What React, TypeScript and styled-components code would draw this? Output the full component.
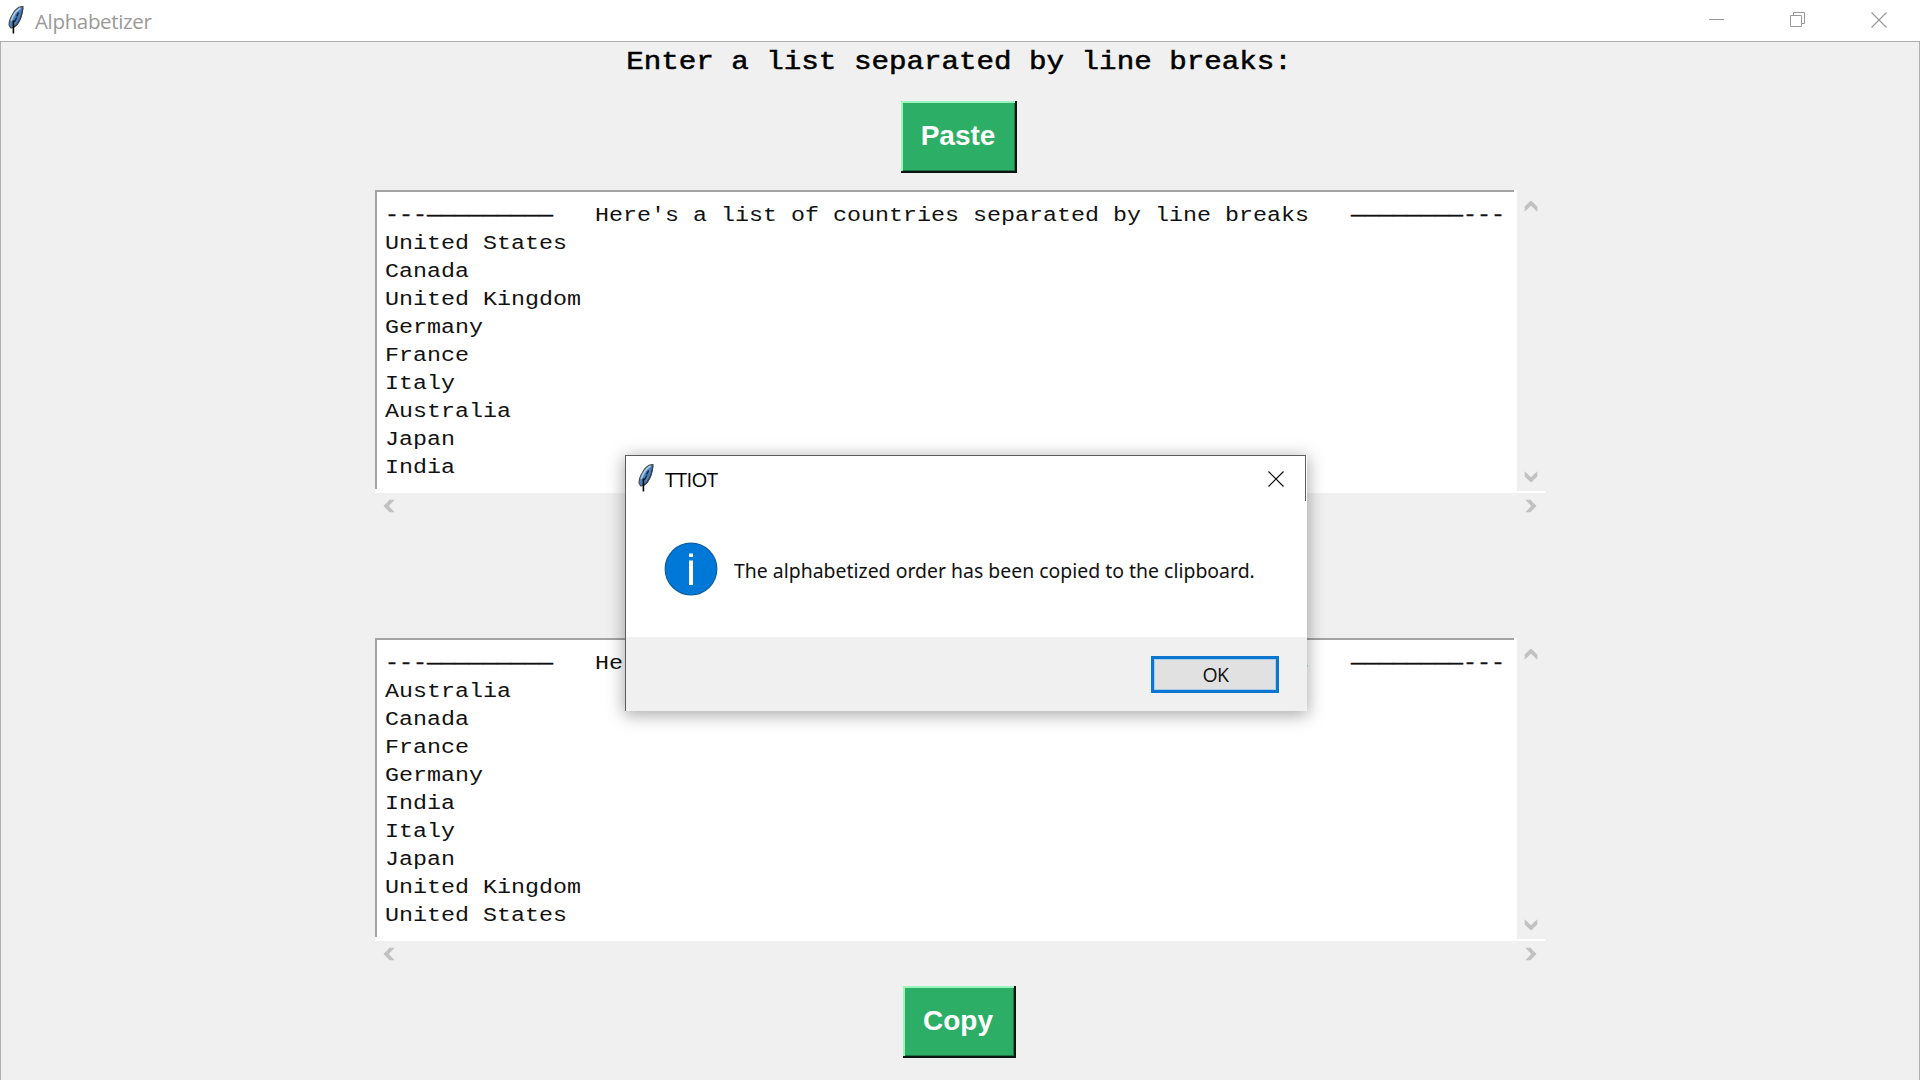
import React from "react";
import styled, { createGlobalStyle } from "styled-components";

const GlobalStyle = createGlobalStyle`
  * { box-sizing: border-box; }
  html, body { margin: 0; padding: 0; background: #f0f0f0; overflow: hidden; }
`;

const uiFont = `"Open Sans", "Noto Sans", sans-serif`;
const monoFont = `"Liberation Mono", "Courier New", monospace`;

const Window = styled.div`
  position: relative;
  width: 1920px;
  height: 1080px;
  display: flex;
  flex-direction: column;
  overflow: hidden;
  background: #f0f0f0;
`;

const TitleBar = styled.header`
  display: flex;
  align-items: center;
  flex: none;
  height: 41px;
  padding-left: 8px;
  background: #fff;
`;

const TitleText = styled.span<{ $active?: boolean }>`
  flex: 1;
  font-family: ${uiFont};
  font-size: 20.5px;
  font-weight: 400;
  letter-spacing: ${(p) => (p.$active ? "-0.6px" : "-0.35px")};
  line-height: 28px;
  color: ${(p) => (p.$active ? "#000" : "#999")};
`;

const WindowControls = styled.div`
  display: flex;
  height: 39px;
  align-self: flex-start;
  padding-right: 1px;
`;

const ControlButton = styled.button`
  display: flex;
  align-items: center;
  justify-content: center;
  width: 81px;
  padding: 0;
  border: 0;
  background: transparent;
  color: #999;
`;

const Body = styled.main`
  flex: 1;
  display: flex;
  flex-direction: column;
  align-items: center;
  border: 1px solid #b0b0b0;
  border-bottom: 0;
`;

const Prompt = styled.h1`
  margin: 0 2px 0 0;
  height: 59px;
  padding-top: 2px;
  font-family: ${monoFont};
  font-size: 29.2px;
  font-weight: 400;
  line-height: 36px;
  white-space: pre;
  color: #000;
  -webkit-text-stroke: 0.6px #000;
  transform: scaleY(0.87);
  transform-origin: 0 28px;
`;

const ActionButton = styled.button<{ $width: number; $top?: number }>`
  flex: none;
  width: ${(p) => p.$width}px;
  height: 72px;
  margin: ${(p) => p.$top ?? 0}px 2px 0 0;
  padding: 0 2px 2px 0;
  border: 0;
  background: #2cae66;
  box-shadow: inset -2px -2px 0 #0b1510, inset 2px 2px 0 #9af5bd,
    inset -3px -3px 0 #1d7343;
  font-family: "Liberation Sans", Arial, sans-serif;
  font-size: 28px;
  font-weight: 700;
  line-height: 32px;
  color: #fff;
`;

const Pane = styled.section<{ $top: number }>`
  display: grid;
  grid-template-columns: 1142px 29px;
  grid-template-rows: 301px 2px 27px;
  flex: none;
  margin-top: ${(p) => p.$top}px;
  margin-left: 1px;
`;

const TextArea = styled.div`
  display: flex;
  background: #fff;
  padding-right: 3px;
`;

const TextContent = styled.div`
  flex: 1;
  height: 299px;
  padding: 9px 0 0 8px;
  border-top: 2px solid #a3a3a3;
  border-left: 2px solid #a3a3a3;
  font-family: ${monoFont};
  font-size: 23.34px;
  color: #111;
`;

const Line = styled.div`
  height: 28px;
  line-height: 28px;
  white-space: pre;
  transform: scaleY(0.87);
  transform-origin: 0 21px;
`;

const Rule = styled.span`
  -webkit-text-stroke: 0.4px #111;
`;

const BottomEdge = styled.div`
  grid-column: 1 / 3;
  background: #fff;
`;

const ScrollBar = styled.div<{ $horizontal?: boolean }>`
  display: flex;
  flex-direction: ${(p) => (p.$horizontal ? "row" : "column")};
  grid-column: ${(p) => (p.$horizontal ? "1 / 3" : "auto")};
  align-items: center;
  justify-content: space-between;
  padding: ${(p) => (p.$horizontal ? "0 8px 2px 7px" : "9px 2px 7px 0")};
  background: #f0f0f0;
`;

const Dialog = styled.div`
  position: absolute;
  left: 625px;
  top: 455px;
  width: 682px;
  height: 256px;
  display: flex;
  flex-direction: column;
  box-shadow: 0 3px 16px 1px rgba(0, 0, 0, 0.34);
  border-left: 1px solid #5c5c5c;
  background: #fff;
`;

const DialogTitleBar = styled.div`
  display: flex;
  align-items: center;
  flex: none;
  width: 680px;
  height: 46px;
  padding-left: 12px;
  border-top: 1px solid #5c5c5c;
  border-right: 1px solid #5c5c5c;
`;

const DialogClose = styled(ControlButton)`
  width: 58px;
  height: 45px;
  color: #000;
`;

const Message = styled.div`
  display: flex;
  align-items: center;
  flex: 1;
  gap: 16px;
  padding: 0 0 1px 38px;
  font-family: "Noto Sans", "Open Sans", sans-serif;
  font-size: 19.4px;
  white-space: nowrap;
  color: #111;
`;

const MessageText = styled.span`
  padding-top: 3px;
  letter-spacing: 0.02px;
`;

const Footer = styled.div`
  display: flex;
  justify-content: flex-end;
  flex: none;
  height: 74px;
  padding: 19px 28px 0 0;
  background: #f0f0f0;
`;

const OkButton = styled.button`
  width: 128px;
  height: 37px;
  padding: 1px 0 0 1px;
  border: 3px solid #0d76d0;
  outline: 0;
  background: #e1e1e1;
  box-shadow: inset 0 0 0 1px #a5cdec;
  font-family: ${uiFont};
  font-size: 19.5px;
  line-height: 24px;
  letter-spacing: -0.5px;
  color: #111;
`;

const Quill = styled.svg`
  flex: none;
  width: 16px;
  height: 28px;
  margin: 0 11px 2px 0;
`;

function Feather() {
  return (
    <Quill viewBox="0 0 16 28">
      <path
        d="M15 .5C11 .5 6.800 4 4.500 8.500C2 12.500.8 16.500 1.200 19.500L3 22L5 21.500L9 18.500C12 15 14.500 8 15 .5Z"
        fill="#4b80bd"
        stroke="#4a4d50"
        strokeWidth="1.200"
      />
      <path d="M12.500 2C8.500 4.500 5 9 3.200 15" fill="none" stroke="#a9c8e6" strokeWidth="1.800" />
      <path d="M14.800 2C14 9 12 14.500 8.500 19L5.500 21.500" fill="none" stroke="#33404d" strokeWidth="1.300" />
      <path d="M10.500 6.500L8.700 10.500M8.800 11.500L6.300 16" fill="none" stroke="#10233a" strokeWidth="1.500" />
      <path d="M5.400 14.500V27.500" stroke="#050505" strokeWidth="1.600" />
    </Quill>
  );
}

function CloseGlyph() {
  return (
    <svg width="16" height="16" viewBox="0 0 16 16">
      <path d="M.5.5L15.500 15.500M15.500.5L.5 15.500" stroke="currentColor" strokeWidth="1.100" />
    </svg>
  );
}

const rotations = { up: 0, right: 90, down: 180, left: 270 };

function Arrow({ direction }: { direction: keyof typeof rotations }) {
  return (
    <svg width="14" height="14" viewBox="0 0 14 14">
      <path
        d="M7 1.500L13.300 7.500V12.700L7 6.700L.7 12.700V7.500Z"
        fill="#c1c1c1"
        transform={`rotate(${rotations[direction]} 7 7)`}
      />
    </svg>
  );
}

const unsorted = [
  "United States",
  "Canada",
  "United Kingdom",
  "Germany",
  "France",
  "Italy",
  "Australia",
  "Japan",
  "India",
];

function ListPane({ items, top }: { items: string[]; top: number }) {
  return (
    <Pane $top={top}>
      <TextArea>
        <TextContent>
          <Line>
            <Rule>---—————————</Rule>
            {"   Here's a list of countries separated by line breaks   "}
            <Rule>————————---</Rule>
          </Line>
          {items.map((item) => (
            <Line key={item}>{item}</Line>
          ))}
        </TextContent>
      </TextArea>
      <ScrollBar>
        <Arrow direction="up" />
        <Arrow direction="down" />
      </ScrollBar>
      <BottomEdge />
      <ScrollBar $horizontal>
        <Arrow direction="left" />
        <Arrow direction="right" />
      </ScrollBar>
    </Pane>
  );
}

export default function App() {
  return (
    <>
      <GlobalStyle />
      <Window>
        <TitleBar>
          <Feather />
          <TitleText>Alphabetizer</TitleText>
          <WindowControls>
            <ControlButton aria-label="Minimize">
              <svg width="15" height="15" viewBox="0 0 15 15">
                <path d="M0 7.500H15" stroke="currentColor" />
              </svg>
            </ControlButton>
            <ControlButton aria-label="Restore">
              <svg width="15" height="15" viewBox="0 0 15 15" fill="none" stroke="currentColor">
                <path d="M.5 3.500H11.500V14.500H.5ZM3.500 3.500V.5H14.500V11.500H11.500" />
              </svg>
            </ControlButton>
            <ControlButton aria-label="Close">
              <CloseGlyph />
            </ControlButton>
          </WindowControls>
        </TitleBar>
        <Body>
          <Prompt>Enter a list separated by line breaks:</Prompt>
          <ActionButton $width={116}>Paste</ActionButton>
          <ListPane items={unsorted} top={17} />
          <ListPane items={[...unsorted].sort()} top={118} />
          <ActionButton $width={113} $top={18}>
            Copy
          </ActionButton>
        </Body>
        <Dialog role="dialog">
          <DialogTitleBar>
            <Feather />
            <TitleText $active>TTIOT</TitleText>
            <DialogClose aria-label="Close">
              <CloseGlyph />
            </DialogClose>
          </DialogTitleBar>
          <Message>
            <svg width="54" height="54" viewBox="0 0 54 54">
              <circle cx="27" cy="27" r="25.800" fill="#0078d7" stroke="#0a5ea6" strokeWidth="1.200" />
              <path d="M25 11.500h4v3.500h-4ZM25 18.500h4V43h-4Z" fill="#fff" />
            </svg>
            <MessageText>The alphabetized order has been copied to the clipboard.</MessageText>
          </Message>
          <Footer>
            <OkButton>OK</OkButton>
          </Footer>
        </Dialog>
      </Window>
    </>
  );
}
